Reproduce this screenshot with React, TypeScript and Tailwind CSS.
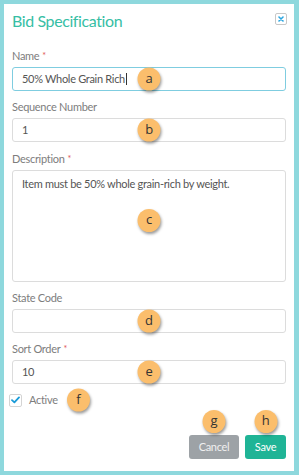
import React from "react";

function Badge({ letter, className }: { letter: string; className: string }) {
  return (
    <div
      className={`absolute w-[23px] h-[23px] rounded-full bg-[#fbbe6c] shadow-[1px_2px_3px_rgba(0,0,0,0.4)] flex items-center justify-center text-[13px] leading-none text-[#333] ${className}`}
      style={{ fontFamily: "'Open Sans', Lato, sans-serif" }}
    >
      <span className="-mt-[2px]">{letter}</span>
    </div>
  );
}

function Label({ text, required }: { text: string; required?: boolean }) {
  return (
    <div className="h-[16px] leading-[16px] text-[11px] tracking-[-0.3px] text-[#7d7d7d]">
      {text}
      {required && <span className="text-[#e05555] text-[9px] align-top ml-[3px]">*</span>}
    </div>
  );
}

export default function App() {
  return (
    <div
      className="w-[299px] h-[475px] bg-[#8ed8dd] pl-[4px] pt-[4px] pr-[5px] pb-[4px]"
      style={{ fontFamily: "Lato, 'Open Sans', sans-serif" }}
    >
      <div className="relative w-full h-full bg-white px-[8px]">
        {/* header */}
        <div className="h-[44px] flex items-start justify-between">
          <div className="mt-[6px] text-[16px] tracking-[-0.4px] leading-[22px] text-[#36bea4]">Bid Specification</div>
          <div className="mt-[9px] mr-[-1px] w-[12px] h-[12px] border border-[#c8c8c8] rounded-[2px] flex items-center justify-center">
            <svg width="6" height="6" viewBox="0 0 6 6">
              <path d="M1 1L5 5M5 1L1 5" stroke="#2ba6e0" strokeWidth="1.6" strokeLinecap="round" />
            </svg>
          </div>
        </div>

        {/* Name */}
        <Label text="Name" required />
        <div className="relative mt-[3px] h-[24px] border border-[#7fcde0] rounded-[3px] flex items-center pl-[9px] text-[11px] tracking-[-0.3px] text-[#555]">
          <span>50% Whole Grain Rich</span>
          <span className="inline-block w-[1px] h-[12px] bg-[#333] ml-[1px]"></span>
          <Badge letter="a" className="left-1/2 -translate-x-1/2 top-1/2 -translate-y-1/2" />
        </div>

        {/* Sequence */}
        <div className="mt-[8px]">
          <Label text="Sequence Number" />
        </div>
        <div className="relative mt-[3px] h-[24px] border border-[#dcdcdc] rounded-[3px] flex items-center pl-[9px] text-[11px] tracking-[-0.3px] text-[#555]">
          <span>1</span>
          <Badge letter="b" className="left-1/2 -translate-x-1/2 top-1/2 -translate-y-1/2" />
        </div>

        {/* Description */}
        <div className="mt-[9px]">
          <Label text="Description" required />
        </div>
        <div className="relative mt-[3px] h-[112px] border border-[#dcdcdc] rounded-[3px] pl-[9px] pt-[5px] text-[11px] tracking-[-0.3px] leading-[16px] text-[#555]">
          <span>Item must be 50% whole grain-rich by weight.</span>
          <Badge letter="c" className="left-1/2 -translate-x-1/2 top-[38px]" />
        </div>

        {/* State Code */}
        <div className="mt-[8px]">
          <Label text="State Code" />
        </div>
        <div className="relative mt-[3px] h-[24px] border border-[#dcdcdc] rounded-[3px]">
          <Badge letter="d" className="left-1/2 -translate-x-1/2 top-1/2 -translate-y-1/2" />
        </div>

        {/* Sort Order */}
        <div className="mt-[8px]">
          <Label text="Sort Order" required />
        </div>
        <div className="relative mt-[3px] h-[24px] border border-[#dcdcdc] rounded-[3px] flex items-center pl-[9px] text-[11px] tracking-[-0.3px] text-[#555]">
          <span>10</span>
          <Badge letter="e" className="left-1/2 -translate-x-1/2 top-1/2 -translate-y-1/2" />
        </div>

        {/* Active */}
        <div className="relative mt-[7px] h-[18px] flex items-center -ml-[3px]">
          <div className="w-[13px] h-[13px] border border-[#d4d4d4] rounded-[2px] bg-white flex items-center justify-center">
            <svg width="9" height="8" viewBox="0 0 9 8">
              <path d="M1 4.2L3.4 6.4L8 1.4" fill="none" stroke="#1a9bd8" strokeWidth="1.8" strokeLinecap="round" strokeLinejoin="round" />
            </svg>
          </div>
          <span className="ml-[7px] text-[11px] tracking-[-0.3px] text-[#7d7d7d]">Active</span>
          <Badge letter="f" className="left-[58px] top-1/2 -translate-y-1/2" />
        </div>

        {/* Buttons */}
        <div className="mt-[26px] flex justify-end gap-[6px]">
          <div className="relative w-[50px] h-[24px] rounded-[3px] bg-[#9da2a6] text-[#f0f0f0] text-[11px] tracking-[-0.3px] flex items-center justify-center">
            Cancel
            <Badge letter="g" className="left-1/2 -translate-x-1/2 top-[-25px]" />
          </div>
          <div className="relative w-[41px] h-[24px] rounded-[3px] bg-[#1fb496] text-white text-[11px] tracking-[-0.3px] flex items-center justify-center">
            Save
            <Badge letter="h" className="left-1/2 -translate-x-1/2 top-[-25px]" />
          </div>
        </div>
      </div>
    </div>
  );
}
